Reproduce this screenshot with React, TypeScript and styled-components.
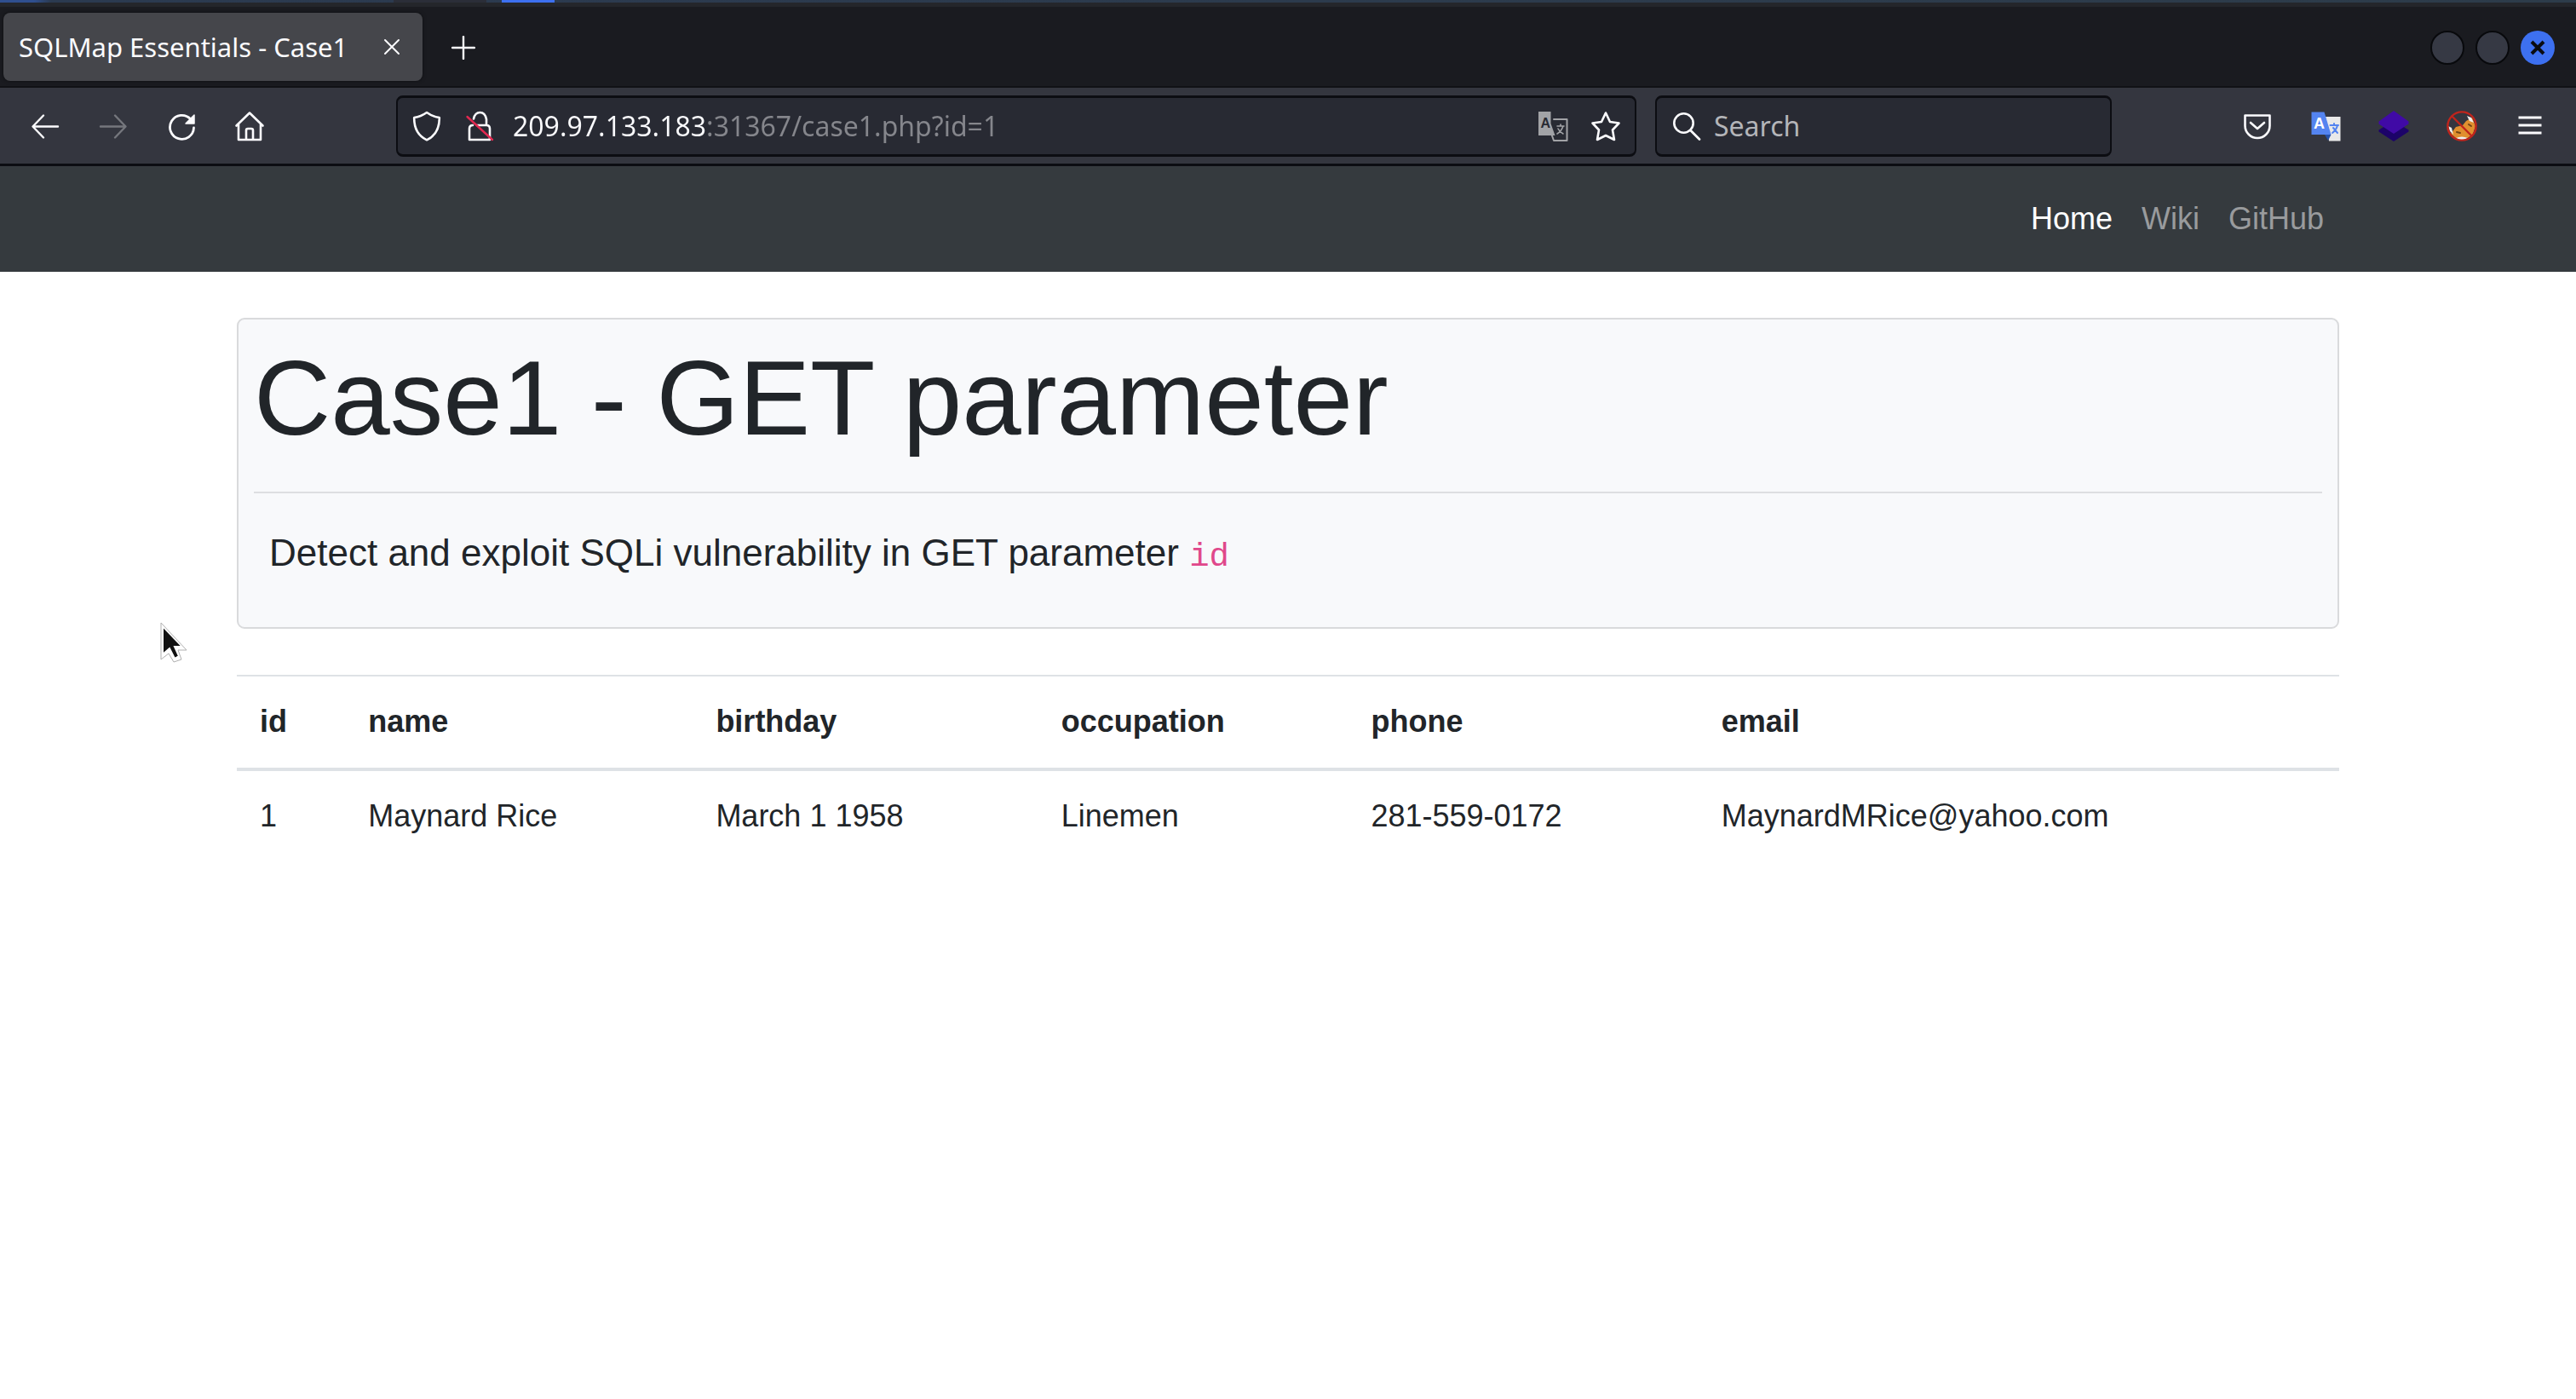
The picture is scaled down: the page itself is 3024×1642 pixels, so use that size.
import React from "react";
import styled, { createGlobalStyle, css } from "styled-components";

const UI_FONT = '"Noto Sans", "Open Sans", sans-serif';
const PAGE_FONT = '"Liberation Sans", Arial, sans-serif';
const MONO_FONT = '"Liberation Mono", "Courier New", monospace';

const GlobalStyle = createGlobalStyle`
  *, *::before, *::after { box-sizing: border-box; }
  body { margin: 0; background: #ffffff; }
  button, input { font: inherit; }
`;

const Screen = styled.div`
  display: flex;
  flex-direction: column;
  min-height: 100vh;
`;

/* ---------- browser chrome ---------- */

const DesktopStrip = styled.div`
  display: flex;
  height: 3px;
  background: linear-gradient(90deg, #2f4f8f 0, #2f4f8f 40px, #2b3a50 60px, #2d3c4a 100%);
`;

const StripGap = styled.span`
  width: 462px;
`;

const StripItem = styled.span<{ $active?: boolean }>`
  width: ${(p) => (p.$active ? 62 : 109)}px;
  margin-right: 18px;
  background: ${(p) => (p.$active ? "#3d70f0" : "#2b2e38")};
`;

const TitleBar = styled.header`
  display: flex;
  align-items: center;
  height: 100px;
  padding: 2px 25px 0 4px;
  border-top: 5px solid #24262b;
  border-bottom: 2px solid #111216;
  background: #1a1b20;
  font: 31px/40px ${UI_FONT};
  color: #fbfbfe;
`;

const Tab = styled.div`
  display: flex;
  align-items: center;
  justify-content: space-between;
  width: 492px;
  height: 80px;
  margin-bottom: 2px;
  padding: 0 18px;
  border-radius: 8px;
  background: #45464b;
  box-shadow: 0 0 4px rgba(0, 0, 0, 0.5);
`;

const TabTitle = styled.span`
  white-space: nowrap;
`;

const PlainButton = styled.button`
  display: inline-flex;
  align-items: center;
  justify-content: center;
  flex: none;
  padding: 0;
  border: 0;
  background: none;
  color: #fbfbfe;
`;

const TabClose = styled(PlainButton)`
  width: 36px;
  height: 36px;
`;

const NewTab = styled(PlainButton)`
  width: 96px;
  height: 80px;
`;

const WindowButtons = styled.div`
  display: flex;
  gap: 13px;
  margin-left: auto;
`;

const WindowButton = styled(PlainButton)<{ $close?: boolean }>`
  width: 40px;
  height: 40px;
  border-radius: 50%;
  ${(p) =>
    p.$close
      ? css`
          background: #3d70f0;
          color: #0b0c10;
        `
      : css`
          border: 2px solid #08090c;
          background: #363944;
        `}
`;

const Toolbar = styled.nav`
  display: flex;
  align-items: center;
  height: 92px;
  padding: 0 14px 0 13px;
  border-bottom: 3px solid #0c0d12;
  background: #34363f;
  font: 32px/40px ${UI_FONT};
`;

const ToolGroup = styled.div`
  display: flex;
  flex: none;
`;

const ToolButton = styled(PlainButton)<{ $dim?: boolean }>`
  width: 80px;
  height: 72px;
  color: ${(p) => (p.$dim ? "#75777d" : "#fbfbfe")};
`;

const Fields = styled.div`
  display: grid;
  grid-template-columns: minmax(0, 1456fr) minmax(0, 536fr);
  gap: 22px;
  flex: 1;
  min-width: 0;
  padding: 0 131px 0 132px;
`;

const Field = styled.div`
  display: flex;
  align-items: center;
  height: 72px;
  padding: 0 3px;
  border: solid #0c0d12;
  border-width: 3px 2px;
  border-radius: 8px;
  background: #282a33;
`;

const FieldButton = styled(PlainButton)`
  width: 62px;
  height: 62px;
`;

const TextInput = styled.input`
  flex: 1;
  min-width: 0;
  height: 48px;
  padding: 0;
  border: 0;
  outline: 0;
  background: none;
  color: #fbfbfe;
  &::placeholder {
    color: #b4b5b9;
    opacity: 1;
  }
`;

/* The host part of the address is bright, the rest is dimmed. */
const AddressInput = styled(TextInput)`
  margin-left: 8px;
  color: #8f9096;
  background: linear-gradient(90deg, #fbfbfe 229px, #85868c 229px);
  -webkit-background-clip: text;
  background-clip: text;
  -webkit-text-fill-color: transparent;
`;

const SearchLabel = styled.label`
  display: flex;
  justify-content: center;
  flex: none;
  width: 64px;
  color: #fbfbfe;
`;

/* ---------- web page ---------- */

const SiteNav = styled.nav`
  display: flex;
  justify-content: center;
  padding: 35px 0;
  background: #353a3e;
`;

const Container = styled.div`
  width: 100%;
  max-width: 2468px;
  margin: 0 auto;
`;

const NavLinks = styled.div`
  display: flex;
  justify-content: flex-end;
  gap: 34px;
  padding: 0 18px;
  font: 36px/54px ${PAGE_FONT};
`;

const NavLink = styled.a<{ $active?: boolean }>`
  color: ${(p) => (p.$active ? "#ffffff" : "#999b9d")};
  text-decoration: none;
`;

const Page = styled.main`
  padding: 54px 0;
  font: 36px/54px ${PAGE_FONT};
  color: #212529;
`;

const Card = styled.section`
  padding: 18px;
  border: 2px solid #d9dadc;
  border-radius: 9px;
  background: #f8f9fb;
`;

const CardTitle = styled.h1`
  margin: 0;
  font-size: 125px;
  line-height: 148px;
  font-weight: 400;
`;

const Rule = styled.hr`
  margin: 36px 0;
  border: 0;
  border-top: 2px solid #dddee1;
`;

const CardText = styled.p`
  margin: 0 18px 36px;
  font-size: 44px;
  line-height: 67px;
`;

const Code = styled.code`
  font: 39px ${MONO_FONT};
  color: #e0488b;
`;

const DataTable = styled.table`
  width: 100%;
  margin-top: 54px;
  border-collapse: collapse;
  text-align: left;
`;

const HeadCell = styled.th`
  padding: 26px 27px 28px;
  border-top: 2px solid #dee2e6;
  border-bottom: 4px solid #dee2e6;
  line-height: 53px;
`;

const Cell = styled.td`
  padding: 26px 27px 28px;
  white-space: nowrap;
`;

const Pointer = styled.svg`
  position: absolute;
  left: 188px;
  top: 730px;
`;

/* ---------- icons ---------- */

const Icon = ({ children, size = 36 }: { children: React.ReactNode; size?: number }) => (
  <svg
    width={size}
    height={size}
    viewBox={`0 0 ${size} ${size}`}
    fill="none"
    stroke="currentColor"
    strokeWidth={2.4}
    strokeLinecap="round"
    strokeLinejoin="round"
    aria-hidden="true"
  >
    {children}
  </svg>
);

const BackIcon = () => (
  <Icon>
    <path d="M33 18.500H4M16 5.500 3.500 18.500 16 31.500" />
  </Icon>
);
const ForwardIcon = () => (
  <Icon>
    <path d="M3 18.500h29M20 5.500l12.500 13L20 31.500" />
  </Icon>
);
const ReloadIcon = () => (
  <Icon>
    <path d="M32.500 20A14 14 0 1 1 28.500 9.500" strokeWidth={2.800} />
    <path d="M33 5v10H23z" fill="currentColor" strokeWidth={1.500} />
  </Icon>
);
const HomeIcon = () => (
  <Icon>
    <path
      d="M2.500 17.500 18 2.500 33.500 17.500M5 15.500V34h26V15.500M14 34V23q0-2 2-2h4q2 0 2 2v11"
      strokeWidth={2.600}
    />
  </Icon>
);
const ShieldIcon = () => (
  <Icon>
    <path d="M18 2Q25 7 32.800 8C33 20 29 29 18 34.300 7 29 3 20 3.200 8Q11 7 18 2z" strokeWidth={2.600} />
  </Icon>
);
const InsecureIcon = () => (
  <Icon>
    <path d="M11 9.500q1.500-7.500 7.500-7.500t7.500 8v7M6 21v13h24V21q0-4-4-4H15M10 17q-4 0-4 4" strokeWidth={2.600} />
    <path d="M3.500 7 33 34" stroke="#e22850" />
  </Icon>
);
const TranslateIcon = () => (
  <Icon>
    <path d="M1 1h14.500v14l5 14H1z" fill="#a2a3a7" stroke="none" />
    <path d="M19 10h15.500v25H19l-2.500-7" stroke="#a2a3a7" strokeWidth={2} />
    <text x="3.500" y="20" fontFamily="Liberation Sans" fontWeight="700" fontSize="16" fill="#282a33" stroke="none">A</text>
    <path d="M23 18h8M27 16v2M30 18q-2 6-7 9M24 21q2 4 6 6" stroke="#a2a3a7" strokeWidth={1.600} />
  </Icon>
);
const StarIcon = () => (
  <Icon>
    <path
      d="M18 2.500l5 10.500 10.500 1.500-7.500 8 2 11.500L18 29l-10 5 2-11.500-7.500-8L13 13z"
      strokeWidth={2.600}
    />
  </Icon>
);
const SearchIcon = () => (
  <Icon>
    <circle cx="14.500" cy="14.500" r="11.200" strokeWidth={2.600} />
    <path d="M22.500 23 33 33.500" strokeWidth={2.800} />
  </Icon>
);
const PocketIcon = () => (
  <Icon>
    <path d="M3.500 5.500h29v12a14.500 14.500 0 0 1-29 0zM10 14l8 7 8-7" strokeWidth={2.600} />
  </Icon>
);
const GoogleTranslateIcon = () => (
  <Icon>
    <path d="M18 7h17.500v28.500H22z" fill="#e9e9e9" stroke="none" />
    <path d="M1.500 1.500h15l8 26.500h-23z" fill="#5484f0" stroke="none" />
    <path d="M17 28h7.500L21 35z" fill="#2450a8" stroke="none" />
    <text x="4" y="21" fontFamily="Liberation Sans" fontWeight="700" fontSize="18" fill="#ffffff" stroke="none">A</text>
    <path d="M23.500 17H33M28 15v2M32 17q-1 5-6 9M27 20l5 6" stroke="#5484f0" strokeWidth={2} />
  </Icon>
);
const CubeIcon = () => (
  <Icon>
    <path d="M.5 22.500 18 12l17.500 10.500v2L18 36 .5 24.500z" fill="#1c0369" stroke="none" />
    <path d="M18 0l17.500 12.500v3L18 27 .5 15.500v-3z" fill="#400aa6" stroke="none" />
  </Icon>
);
const FoxIcon = () => (
  <Icon>
    <circle cx="18" cy="18" r="16" fill="#34363f" stroke="none" />
    <path d="M5 27l6-8 8-2 4-5 7-4 4 10-3 9-6 5H11z" fill="#e08f2f" stroke="none" />
    <path d="M24 6l5 2 3 6-5-2zM2 18l4 2 2 8-4-4zM11 32q7-3 14 0l-7 3z" fill="#eeeeee" stroke="none" />
    <path d="M12 25l4 1M26 16l3 2" stroke="#6f4314" strokeWidth={2} />
    <circle cx="18" cy="18" r="16.600" stroke="#c0241c" />
    <path d="M6.500 6.500l23 23" stroke="#c0241c" />
  </Icon>
);
const MenuIcon = () => (
  <Icon>
    <path d="M4.500 8h27M4.500 17h27M4.500 26h27" strokeLinecap="butt" strokeWidth={3} />
  </Icon>
);

/* ---------- data ---------- */

const columns = ["id", "name", "birthday", "occupation", "phone", "email"];
const rows = [["1", "Maynard Rice", "March 1 1958", "Linemen", "281-559-0172", "MaynardMRice@yahoo.com"]];
const links = ["Home", "Wiki", "GitHub"];

export default function App() {
  return (
    <Screen>
      <GlobalStyle />
      <DesktopStrip>
        <StripGap />
        <StripItem />
        <StripItem $active />
      </DesktopStrip>
      <TitleBar>
        <Tab>
          <TabTitle>SQLMap Essentials - Case1</TabTitle>
          <TabClose aria-label="Close tab">
            <Icon size={20}>
              <path d="M2 2l16 16M18 2 2 18" strokeWidth={2} />
            </Icon>
          </TabClose>
        </Tab>
        <NewTab aria-label="New tab">
          <Icon size={28}>
            <path d="M14 1v26M1 14h26" />
          </Icon>
        </NewTab>
        <WindowButtons>
          <WindowButton aria-label="Minimize" />
          <WindowButton aria-label="Maximize" />
          <WindowButton $close aria-label="Close window">
            <Icon size={20}>
              <path d="M3 3l14 14M17 3 3 17" strokeWidth={4} strokeLinecap="butt" />
            </Icon>
          </WindowButton>
        </WindowButtons>
      </TitleBar>
      <Toolbar>
        <ToolGroup>
          <ToolButton aria-label="Back"><BackIcon /></ToolButton>
          <ToolButton $dim aria-label="Forward"><ForwardIcon /></ToolButton>
          <ToolButton aria-label="Reload"><ReloadIcon /></ToolButton>
          <ToolButton aria-label="Home page"><HomeIcon /></ToolButton>
        </ToolGroup>
        <Fields>
          <Field>
            <FieldButton aria-label="Tracking protection"><ShieldIcon /></FieldButton>
            <FieldButton aria-label="Connection not secure"><InsecureIcon /></FieldButton>
            <AddressInput aria-label="Address" defaultValue="209.97.133.183:31367/case1.php?id=1" spellCheck={false} />
            <FieldButton aria-label="Translate page"><TranslateIcon /></FieldButton>
            <FieldButton aria-label="Bookmark this page"><StarIcon /></FieldButton>
          </Field>
          <Field>
            <SearchLabel htmlFor="search" aria-label="Search"><SearchIcon /></SearchLabel>
            <TextInput id="search" placeholder="Search" />
          </Field>
        </Fields>
        <ToolGroup>
          <ToolButton aria-label="Pocket"><PocketIcon /></ToolButton>
          <ToolButton aria-label="Translate"><GoogleTranslateIcon /></ToolButton>
          <ToolButton aria-label="Wappalyzer"><CubeIcon /></ToolButton>
          <ToolButton aria-label="FoxyProxy"><FoxIcon /></ToolButton>
          <ToolButton aria-label="Menu"><MenuIcon /></ToolButton>
        </ToolGroup>
      </Toolbar>

      <SiteNav>
        <Container>
          <NavLinks>
            {links.map((name, i) => (
              <NavLink key={name} href="#" $active={i === 0}>{name}</NavLink>
            ))}
          </NavLinks>
        </Container>
      </SiteNav>
      <Page>
        <Container>
          <Card>
            <CardTitle>Case1 - GET parameter</CardTitle>
            <Rule />
            <CardText>
              Detect and exploit SQLi vulnerability in GET parameter <Code>id</Code>
            </CardText>
          </Card>
          <DataTable>
            <thead>
              <tr>
                {columns.map((name) => (
                  <HeadCell key={name} scope="col">{name}</HeadCell>
                ))}
              </tr>
            </thead>
            <tbody>
              {rows.map((row) => (
                <tr key={row[0]}>
                  {row.map((value) => (
                    <Cell key={value}>{value}</Cell>
                  ))}
                </tr>
              ))}
            </tbody>
          </DataTable>
        </Container>
      </Page>

      <Pointer width="34" height="50" viewBox="0 0 34 50" aria-hidden="true">
        <path
          d="M3 5v33l8-7 6 12 5-3-5-11h9z"
          fill="#111111"
          stroke="#ffffff"
          strokeWidth="2"
        />
        <path d="M1 1v43l9-7 6 10 9-3-4-11h10z" fill="none" stroke="#b0b0b0" strokeWidth="1" />
      </Pointer>
    </Screen>
  );
}
